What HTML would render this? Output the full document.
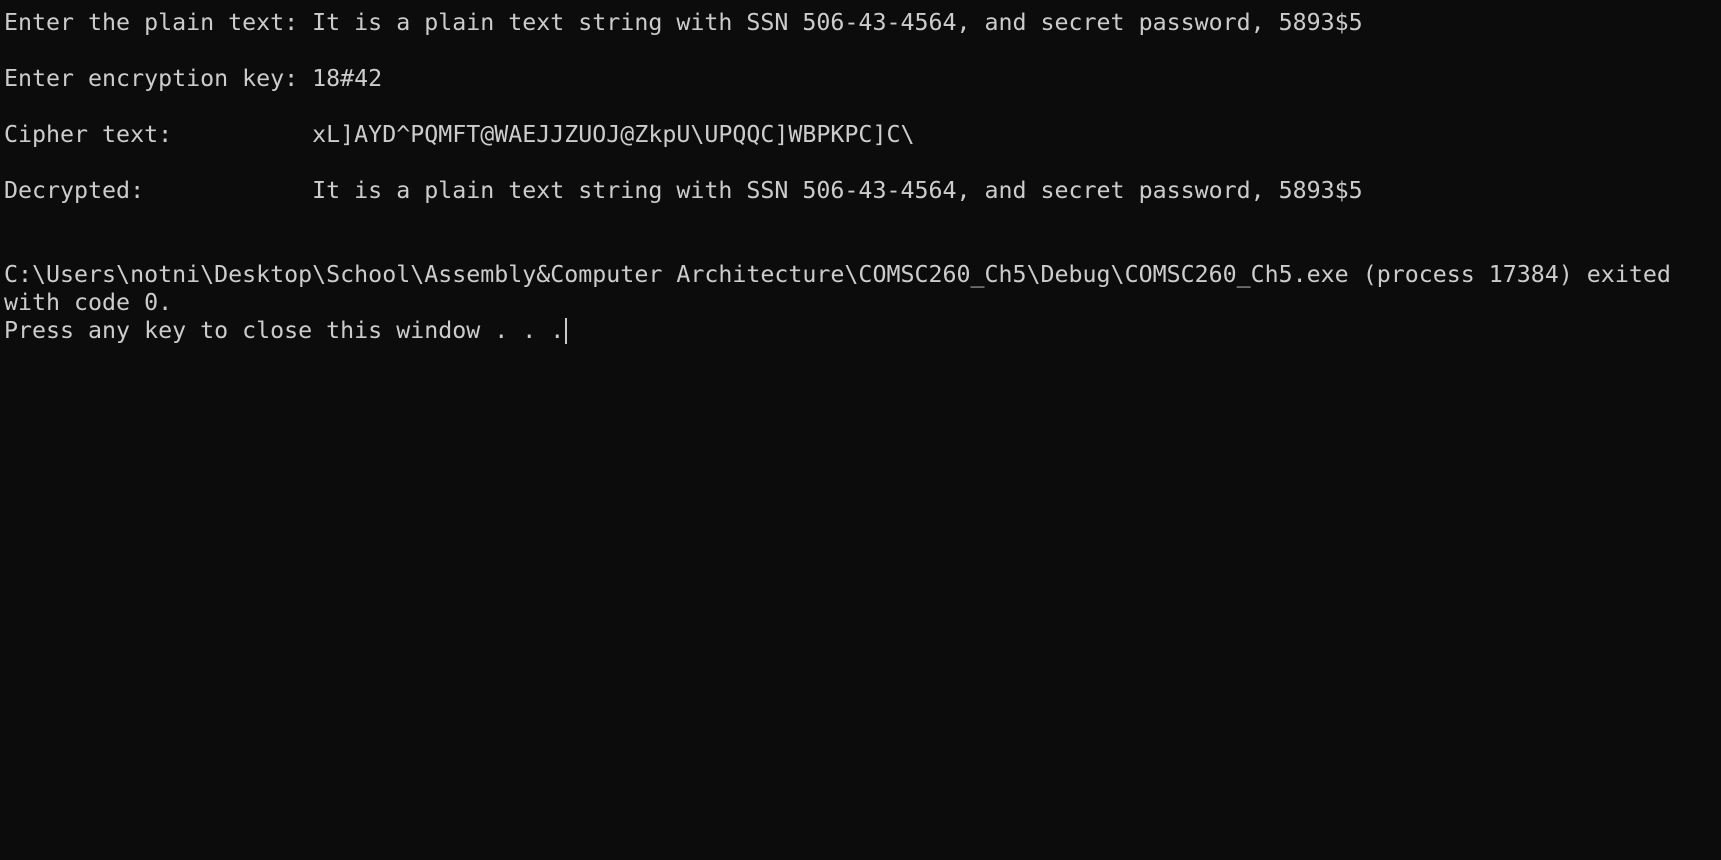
<!DOCTYPE html>
<html><head><meta charset="utf-8"><style>
html,body{margin:0;padding:0;background:#0c0c0c;width:1721px;height:860px;overflow:hidden}
pre{margin:0;padding:9px 0 0 4px;font-family:"DejaVu Sans Mono","Liberation Mono",monospace;font-size:23.28px;line-height:28px;color:#cccccc;white-space:pre}
.cur{display:inline-block;width:2px;height:26px;background:#cccccc;vertical-align:-6px;margin-left:1px}
</style></head><body><pre>Enter the plain text: It is a plain text string with SSN 506-43-4564, and secret password, 5893$5

Enter encryption key: 18#42

Cipher text:          xL]AYD^PQMFT@WAEJJZUOJ@ZkpU\UPQQC]WBPKPC]C\

Decrypted:            It is a plain text string with SSN 506-43-4564, and secret password, 5893$5


C:\Users\notni\Desktop\School\Assembly&amp;Computer Architecture\COMSC260_Ch5\Debug\COMSC260_Ch5.exe (process 17384) exited
with code 0.
Press any key to close this window . . .<span class="cur"></span></pre></body></html>
